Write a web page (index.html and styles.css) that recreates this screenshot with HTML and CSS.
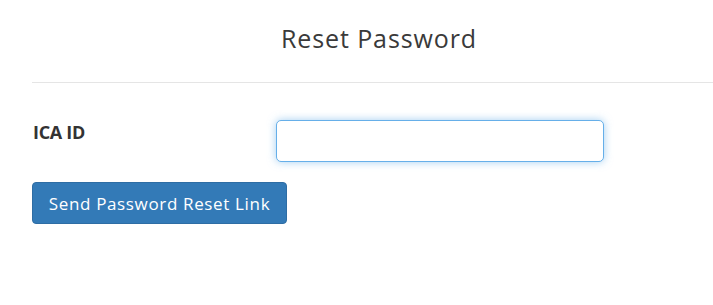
FILE: index.html
```html
<!DOCTYPE html>
<html lang="en">
<head>
<meta charset="utf-8">
<title>Reset Password</title>
<link rel="stylesheet" href="styles.css">
</head>
<body>
<div class="page">
  <div class="header">
    <h4 class="title">Reset Password</h4>
  </div>
  <form class="form">
    <div class="row">
      <label class="label" for="ica">ICA ID</label>
      <input class="input" id="ica" type="text">
    </div>
    <button class="btn" type="button">Send Password Reset Link</button>
  </form>
</div>
</body>
</html>
```
FILE: styles.css
```css
html, body {
  margin: 0;
  padding: 0;
  background: #ffffff;
}
body {
  font-family: "Open Sans", "Liberation Sans", sans-serif;
  color: #333333;
}
.page {
  padding-left: 32px;
}
.header {
  padding-top: 22px;
  padding-bottom: 28px;
  border-bottom: 1px solid #e5e5e5;
  text-align: center;
}
.title {
  margin: 0;
  padding-left: 13px;
  font-size: 25px;
  line-height: 32px;
  font-weight: 400;
  letter-spacing: 0.9px;
  color: #3a3a3a;
}
.form {
  margin: 0;
  padding-top: 37px;
  display: flex;
  flex-direction: column;
  align-items: flex-start;
  gap: 20px;
}
.row {
  display: flex;
  align-items: flex-start;
}
.label {
  width: 244px;
  font-size: 18px;
  line-height: 24px;
  font-weight: 700;
  color: #333333;
  box-sizing: border-box;
  padding-left: 1px;
  letter-spacing: -0.3px;
}
.input {
  width: 328px;
  height: 42px;
  box-sizing: border-box;
  border: 1px solid #66afe9;
  border-radius: 5px;
  box-shadow: 0 0 8px rgba(102, 175, 233, 0.6);
  outline: none;
  margin: 0;
  padding: 6px 12px;
  font: inherit;
}
.btn {
  width: 255px;
  height: 42px;
  box-sizing: border-box;
  background: #337ab7;
  border: 1px solid #2e6da4;
  border-radius: 4px;
  color: #ffffff;
  font-family: inherit;
  font-size: 17px;
  letter-spacing: 0.65px;
  padding: 0;
  margin: 0;
  display: flex;
  align-items: center;
  justify-content: center;
  cursor: pointer;
}
```
